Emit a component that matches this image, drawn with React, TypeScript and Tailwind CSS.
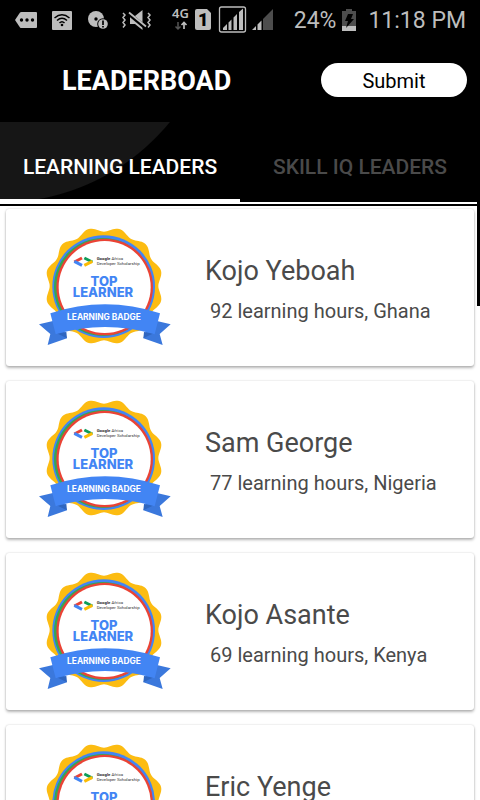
import React from "react";

type Leader = { name: string; hours: number; country: string };

const leaders: Leader[] = [
  { name: "Kojo Yeboah", hours: 92, country: "Ghana" },
  { name: "Sam George", hours: 77, country: "Nigeria" },
  { name: "Kojo Asante", hours: 69, country: "Kenya" },
  { name: "Eric Yenge", hours: 67, country: "Kenya" },
];

// Twelve-lobed outline of the yellow rosette.
const rosette = Array.from({ length: 240 }, (_, i) => {
  const a = (i * Math.PI) / 120;
  const r = 170 - 7 * Math.cos(12 * a);
  return `${(222 + r * Math.sin(a)).toFixed(1)},${(198 - r * Math.cos(a)).toFixed(1)}`;
}).join(" ");

function Badge() {
  return (
    <svg viewBox="0 0 450 405" className="h-[135px] w-[150px] shrink-0" aria-hidden="true">
      <polygon points={rosette} fill="#fcbc12" />
      <circle cx="221" cy="200" r="154" fill="#4285f4" />
      <circle cx="219" cy="201" r="147" fill="#34a853" />
      <circle cx="224" cy="201" r="145" fill="#ea4335" />
      <circle cx="224" cy="201" r="138" fill="#fff" />
      <g fill="none" strokeWidth="9">
        <path d="M156 114L133 126" stroke="#ea4335" />
        <path d="M133 124L156 136" stroke="#4285f4" />
        <path d="M163 114L187 126" stroke="#0f9d58" />
        <path d="M187 124L163 136" stroke="#fbbc04" />
      </g>
      <g fill="#333" fontFamily="Roboto, sans-serif" fontSize="13">
        <text x="200" y="121" fontWeight="700">
          Google <tspan fontWeight="400">Africa</tspan>
        </text>
        <text x="200" y="136">Developer Scholarship</text>
      </g>
      <g fill="#4285f4" fontFamily="Inter, sans-serif" fontWeight="800" textAnchor="middle">
        <text x="222" y="197" fontSize="39">TOP</text>
        <text x="219" y="231" fontSize="39">LEARNER</text>
      </g>
      <path d="M27 313L85 299L111 355L53 375L61 342Z" fill="#3b78dc" />
      <path d="M422 313L365 299L340 355L398 375L389 342Z" fill="#3b78dc" />
      <path d="M77 338L111 355L109 336Z" fill="#2f66c0" />
      <path d="M374 338L340 355L342 336Z" fill="#2f66c0" />
      <path d="M61 280Q225 226 390 280L374 343Q225 299 77 343Z" fill="#4285f4" />
      <text x="222" y="299" fontSize="25" fontWeight="700" fill="#fff" textAnchor="middle" fontFamily="Inter, sans-serif">
        LEARNING BADGE
      </text>
    </svg>
  );
}

function StatusBar() {
  return (
    <div className="flex h-10 items-center justify-between text-[#bdbdbd]">
      <svg viewBox="0 0 280 40" className="h-10 w-[280px] shrink-0" fill="#bdbdbd" aria-label="Notifications and signal">
        <path d="M15 20L20 12.500Q20.500 12 21.500 12H36Q37 12 37 13V27Q37 28 36 28H21.500Q20.500 28 20 27.500Z" />
        <g fill="#000">
          <circle cx="21.500" cy="20" r="1.700" />
          <circle cx="27" cy="20" r="1.700" />
          <circle cx="32.500" cy="20" r="1.700" />
        </g>
        <rect x="52" y="11" width="20" height="19" rx="1" />
        <g fill="none" stroke="#000" strokeWidth="1.500">
          <path d="M54.500 18Q62 11.500 69.500 18M57 20.500Q62 16 67 20.500M59.500 23Q62 20.500 64.500 23" />
        </g>
        <circle cx="62" cy="25" r="1.300" fill="#000" />
        <circle cx="96" cy="19" r="8" />
        <circle cx="96" cy="19" r="1.700" fill="#000" />
        <circle cx="103" cy="24" r="5.800" fill="#000" />
        <circle cx="103" cy="24" r="4.800" />
        <path d="M103 20.500V25M103 26V27.500" stroke="#000" strokeWidth="1.700" />
        <path d="M130 16H135L142.500 10V30L135 24H130Z" />
        <path d="M128 13L146 28" stroke="#000" strokeWidth="4" />
        <path d="M129 12.500L146 26.500" stroke="#bdbdbd" strokeWidth="1.800" />
        <path d="M123 13L125 15L123 17.500L125 20L123 22.500L125 25L123 27.500M148 13L150 15L148 17.500L150 20L148 22.500L150 25L148 27.500" fill="none" stroke="#bdbdbd" strokeWidth="1.500" />
        <text x="172" y="18" fontSize="13" fontWeight="600" fontFamily="'Noto Sans', sans-serif">4G</text>
        <path d="M178 22V29M175.500 26.500L178 29L180.500 26.500" stroke="#555" strokeWidth="1.500" fill="none" />
        <path d="M184 29V23M181.500 25L184 22.500L186.500 25" stroke="#bdbdbd" strokeWidth="1.700" fill="none" />
        <path d="M197 9H207L211 13V28Q211 30 209 30H197Q195 30 195 28V11Q195 9 197 9Z" />
        <text x="198" y="26" fontSize="18" fontWeight="900" fill="#000" fontFamily="Roboto, sans-serif">1</text>
        <rect x="219.500" y="7" width="26" height="25" rx="2" fill="none" stroke="#bdbdbd" strokeWidth="1.300" />
        <path d="M223 30V28L227 24V30ZM228.500 30V22.500L231.500 19.500V30ZM233.500 30V17.500L237 14V30ZM239 30V12L243 8.500V30Z" />
        <path d="M252 30L256 26V30ZM257.500 30V24.500L261.500 20.500V30Z" />
        <path d="M263 30V19L273 9V30Z" fill="#4d4d4d" />
      </svg>
      <div className="flex shrink-0 items-center pr-[14px] font-[Roboto,sans-serif] text-[23px]">
        <span className="pt-0.5">24%</span>
        <svg viewBox="0 0 14 22" className="mx-1.5 h-[22px] w-[14px]" aria-label="Charging">
          <path d="M0 2H4V0H10V2H14V22H0Z" fill="#4d4d4d" />
          <path d="M0 17H14V22H0Z" fill="#bdbdbd" />
          <path d="M6 5H11L9 10H12L4 19L6 12H3Z" fill="#000" />
        </svg>
        <span className="pt-0.5 pl-1.5">11:18 PM</span>
      </div>
    </div>
  );
}

function LeaderCard({ leader }: { leader: Leader }) {
  return (
    <li className="flex h-[157px] shrink-0 items-center rounded-[3px] bg-white pl-6 shadow-[0_2px_3px_rgba(0,0,0,0.28),0_0_2px_rgba(0,0,0,0.18)]">
      <Badge />
      <div className="ml-[25px] pt-1.5 text-[#4a4a4a]">
        <h2 className="text-[27px] leading-10">{leader.name}</h2>
        <p className="pl-[5px] text-xl leading-10">
          {leader.hours} learning hours, {leader.country}
        </p>
      </div>
    </li>
  );
}

export default function App() {
  return (
    <div className="relative flex h-screen flex-col overflow-hidden bg-white font-[Roboto,sans-serif]">
      <header className="shrink-0 bg-black">
        <StatusBar />
        <div className="flex h-[82px] items-center justify-between pr-[13px] pb-0.5 pl-[62px]">
          <h1 className="pt-0.5 text-[27px] font-bold text-white">LEADERBOAD</h1>
          <button type="button" className="h-[34px] w-[146px] rounded-full bg-white pt-0.5 text-[20px] text-black">
            Submit
          </button>
        </div>
        <div role="tablist" className="grid h-[82px] grid-cols-2 border-b-2 border-white bg-[radial-gradient(circle_at_0_-139px,#161616_219px,#000_220px)]">
          <button type="button" role="tab" aria-selected="true" className="border-b-3 border-white pt-3.5 text-[21px] font-medium whitespace-nowrap text-white">
            LEARNING LEADERS
          </button>
          <button type="button" role="tab" aria-selected="false" className="border-b-3 border-transparent pt-3.5 text-[21px] font-medium whitespace-nowrap text-[#4a4a4a]">
            SKILL IQ LEADERS
          </button>
        </div>
        <div className="h-0.5" />
      </header>
      <main className="min-h-0 flex-1 overflow-hidden px-1.5 pt-[3px]">
        <ul className="flex flex-col gap-[15px]">
          {leaders.map((leader) => (
            <LeaderCard key={leader.name} leader={leader} />
          ))}
        </ul>
      </main>
      <div className="absolute top-[202px] right-0 h-[104px] w-[3px] bg-black" />
    </div>
  );
}
